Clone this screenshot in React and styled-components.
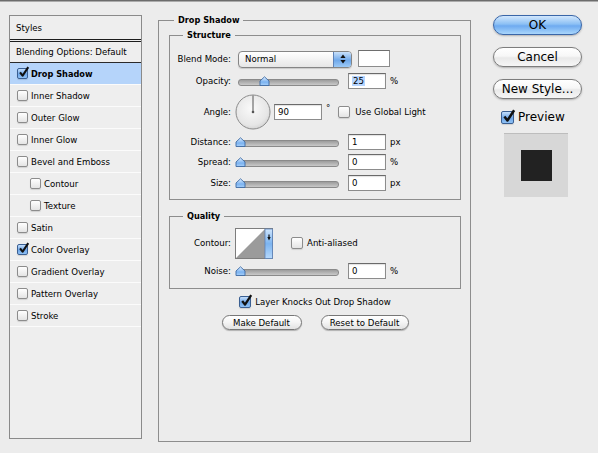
import React from "react";
import styled, { createGlobalStyle } from "styled-components";

const GlobalStyle = createGlobalStyle`
  html, body {
    margin: 0;
    padding: 0;
    background: #ececec;
  }
  body {
    font-family: "Lucida Grande", "DejaVu Sans", sans-serif;
    font-size: 8.6px;
    color: #000;
  }
  * {
    box-sizing: border-box;
  }
`;

const Window = styled.div`
  display: flex;
  align-items: flex-start;
  width: 598px;
  height: 453px;
  padding-left: 9px;
  border-top: 1px solid #6c6c6c;
  box-shadow: inset 0 1px 0 #ababab;
  overflow: hidden;
`;

/* ---------- left list ---------- */

const StylesList = styled.div`
  width: 133px;
  height: 424px;
  margin-top: 14px;
  border: 1px solid #8a8a8a;
  background: #eeeeee;
`;

const ListHeader = styled.div`
  height: 26px;
  display: flex;
  align-items: center;
  padding-left: 6px;
  border-bottom: 3px double #1c1c1c;
`;

const BlendingRow = styled.div`
  height: 21px;
  display: flex;
  align-items: center;
  padding-left: 6px;
  border-bottom: 1px solid #2a2a2a;
`;

const ListItem = styled.div`
  height: 22px;
  display: flex;
  align-items: center;
  gap: 3px;
  padding-left: ${(p) => (p.$indent ? "20px" : "7px")};
  border-bottom: 1px solid #fbfbfb;
  background: ${(p) => (p.$selected ? "#b5d4fa" : "transparent")};
  font-weight: ${(p) => (p.$selected ? "bold" : "normal")};
  font-size: ${(p) => (p.$selected ? "8.2px" : "8.6px")};
`;

/* ---------- checkbox ---------- */

const CheckBox = styled.span`
  position: relative;
  flex: none;
  display: inline-block;
  width: ${(p) => p.$size}px;
  height: ${(p) => p.$size}px;
  border-radius: 2px;
  border: 1px solid ${(p) => (p.$checked ? "#3a5f92" : "#8c8c8c")};
  background: ${(p) =>
    p.$checked
      ? "linear-gradient(#c4defb, #6ea6e8 55%, #8fc1f5)"
      : "linear-gradient(#ffffff, #e4e4e4)"};
  box-shadow: 0 1px 1px rgba(0, 0, 0, 0.12);

  svg {
    position: absolute;
    left: 0;
    top: -3px;
    overflow: visible;
  }
`;

function Check({ checked, size = 11 }) {
  return (
    <CheckBox $checked={checked} $size={size}>
      {checked && (
        <svg width={size} height={size} viewBox="0 0 12 12">
          <path
            d="M2.2 7 L5 10.6 L11.2 1.2"
            fill="none"
            stroke="#111"
            strokeWidth="2.3"
            strokeLinejoin="round"
          />
        </svg>
      )}
    </CheckBox>
  );
}

/* ---------- middle groups ---------- */

const Group = styled.fieldset`
  margin: 0;
  min-width: 0;
  border: 1px solid #8d8d8d;
  padding: ${(p) => p.$pad};
`;

const OuterGroup = styled(Group)`
  width: 313px;
  height: 428px;
  margin-top: 13px;
  margin-left: 16px;
`;

const GroupTitle = styled.legend`
  padding: 0 4px;
  margin-left: ${(p) => p.$offset}px;
  font-weight: bold;
  font-size: 8.2px;
  line-height: 12px;
`;

const Row = styled.div`
  display: flex;
  align-items: center;
  height: ${(p) => p.$h}px;
`;

const CenterRow = styled(Row)`
  justify-content: center;
  gap: ${(p) => p.$gap || 4}px;
  margin-top: 5px;
`;

const Label = styled.span`
  flex: none;
  width: 61px;
  margin-right: 4px;
  text-align: right;
`;

const Select = styled.div`
  display: flex;
  width: 114px;
  height: 17px;
  margin-left: 3px;
  border: 1px solid #858585;
  border-radius: 4px;
  overflow: hidden;
  background: linear-gradient(#ffffff, #f0f0f0 60%, #e6e6e6);
  box-shadow: 0 1px 1px rgba(0, 0, 0, 0.15);
`;

const SelectText = styled.span`
  flex: 1;
  display: flex;
  align-items: center;
  padding-left: 6px;
`;

const SelectArrows = styled.span`
  width: 18px;
  display: flex;
  align-items: center;
  justify-content: center;
  border-left: 1px solid #5d82b8;
  background: linear-gradient(#c9e1fb, #6fa8ea 55%, #9ccaf7);
`;

const Swatch = styled.span`
  width: 32px;
  height: 17px;
  margin-left: 6px;
  margin-top: -1px;
  background: #fff;
  border: 1px solid #8c8c8c;
  border-top-color: #6e6e6e;
`;

const NumberField = styled.span`
  display: flex;
  align-items: center;
  width: ${(p) => p.$w || 38}px;
  height: 16px;
  margin-left: ${(p) => p.$ml || 6}px;
  padding-left: 3px;
  background: #fff;
  border: 1px solid #8c8c8c;
  border-top-color: #6a6a6a;
  box-shadow: inset 0 1px 1px rgba(0, 0, 0, 0.12);
`;

const Selected = styled.span`
  background: #b5d5ff;
  padding: 0 1px;
`;

const Unit = styled.span`
  margin-left: 4px;
  align-self: ${(p) => (p.$raised ? "flex-start" : "center")};
  margin-top: ${(p) => (p.$raised ? "12px" : "0")};
`;

const SliderWrap = styled.div`
  position: relative;
  width: 107px;
  height: 12px;

  &::before {
    content: "";
    position: absolute;
    left: 3px;
    right: 3px;
    top: 4px;
    height: 5px;
    border-radius: 3px;
    border: 1px solid #8a8a8a;
    background: linear-gradient(#9c9c9c, #c9c9c9);
  }
`;

const Thumb = styled.svg`
  position: absolute;
  top: 1px;
`;

function Slider({ value }) {
  const left = -0.5 + (value / 100) * 97;
  return (
    <SliderWrap>
      <Thumb width="11" height="10" viewBox="0 0 11 10" style={{ left }}>
        <defs>
          <linearGradient id="thumbFill" x1="0" y1="0" x2="0" y2="1">
            <stop offset="0" stopColor="#e3f0ff" />
            <stop offset="0.6" stopColor="#7ab2f0" />
            <stop offset="1" stopColor="#a8d0fa" />
          </linearGradient>
        </defs>
        <path
          d="M1 9.5 L1 5 L5.5 0.8 L10 5 L10 9.5 Z"
          fill="url(#thumbFill)"
          stroke="#3d6aa3"
          strokeWidth="0.9"
          strokeLinejoin="round"
        />
      </Thumb>
    </SliderWrap>
  );
}

function Dial() {
  return (
    <svg width="36" height="36" viewBox="0 0 36 36">
      <defs>
        <radialGradient id="dialFill" cx="0.45" cy="0.4" r="0.65">
          <stop offset="0" stopColor="#fafafa" />
          <stop offset="0.75" stopColor="#e6e6e6" />
          <stop offset="1" stopColor="#cfcfcf" />
        </radialGradient>
      </defs>
      <circle cx="18" cy="18" r="17" fill="url(#dialFill)" stroke="#8b8b8b" strokeWidth="1" />
      <line x1="18" y1="18" x2="18" y2="1.5" stroke="#555" strokeWidth="1" />
      <circle cx="18" cy="18" r="1.3" fill="#555" />
    </svg>
  );
}

function ContourSwatch() {
  return (
    <svg width="38" height="31" viewBox="0 0 38 31">
      <defs>
        <linearGradient id="contourArrow" x1="0" y1="0" x2="0" y2="1">
          <stop offset="0" stopColor="#cfe5fc" />
          <stop offset="0.5" stopColor="#7cb4f0" />
          <stop offset="1" stopColor="#b7d9fb" />
        </linearGradient>
      </defs>
      <rect x="0.5" y="0.5" width="37" height="30" fill="#fff" stroke="#7d7d7d" />
      <polygon points="1,30 30,1 30,30" fill="#9b9b9b" />
      <rect x="30" y="1" width="7.5" height="29.5" fill="url(#contourArrow)" stroke="#5d82b8" strokeWidth="0.8" />
      <polygon points="32.3,9 35.7,9 34,12.5" fill="#111" />
      <rect x="33.4" y="6.5" width="1.2" height="3" fill="#111" />
    </svg>
  );
}

const ContourBox = styled.span`
  display: flex;
  width: 38px;
  height: 31px;
`;

const DialBox = styled.span`
  display: flex;
  width: 36px;
  height: 36px;
`;

const InlineCheck = styled.span`
  display: flex;
  align-items: center;
  gap: ${(p) => p.$gap || 5}px;
  margin-left: ${(p) => p.$ml}px;
`;

const PillButton = styled.button`
  width: ${(p) => p.$w}px;
  height: 15px;
  padding: 0;
  font-family: inherit;
  font-size: 8.6px;
  color: #000;
  border: 1px solid #777;
  border-radius: 8px;
  background: linear-gradient(#ffffff, #f4f4f4 50%, #e2e2e2);
  box-shadow: 0 1px 1px rgba(0, 0, 0, 0.25);
`;

/* ---------- right column ---------- */

const SideColumn = styled.div`
  display: flex;
  flex-direction: column;
  width: 89px;
  margin-top: 14px;
  margin-left: 22px;
`;

const AquaButton = styled.button`
  height: 20px;
  margin-bottom: 12px;
  padding: 0;
  font-family: inherit;
  font-size: 12px;
  color: #000;
  border-radius: 10px;
  border: 1px solid ${(p) => (p.$primary ? "#3a66a8" : "#7d7d7d")};
  background: ${(p) =>
    p.$primary
      ? "linear-gradient(#d2e7fd, #8cc0f4 45%, #6eaaf0 55%, #a9d6fc)"
      : "linear-gradient(#ffffff, #f7f7f7 45%, #e9e9e9 55%, #f6f6f6)"};
  box-shadow: 0 1px 2px rgba(0, 0, 0, 0.25);
`;

const PreviewToggle = styled.div`
  display: flex;
  align-items: center;
  gap: 4px;
  height: 16px;
  margin-top: -2px;
  padding-left: 8px;
  font-size: 12px;
`;

const PreviewBox = styled.div`
  display: flex;
  align-items: center;
  justify-content: center;
  width: 64px;
  height: 64px;
  margin-top: 8px;
  margin-left: 11px;
  background: #d7d7d7;
  border-top: 1px solid #bdbdbd;
`;

const PreviewSquare = styled.div`
  width: 31px;
  height: 31px;
  background: #222;
`;

const effects = [
  { name: "Drop Shadow", checked: true, selected: true },
  { name: "Inner Shadow" },
  { name: "Outer Glow" },
  { name: "Inner Glow" },
  { name: "Bevel and Emboss" },
  { name: "Contour", indent: true },
  { name: "Texture", indent: true },
  { name: "Satin" },
  { name: "Color Overlay", checked: true },
  { name: "Gradient Overlay" },
  { name: "Pattern Overlay" },
  { name: "Stroke" },
];

function SliderRow({ label, value, unit, text, h }) {
  return (
    <Row $h={h}>
      <Label>{label}</Label>
      <Slider value={value} />
      <NumberField>{text}</NumberField>
      <Unit>{unit}</Unit>
    </Row>
  );
}

export default function App() {
  return (
    <>
      <GlobalStyle />
      <Window>
        <StylesList>
          <ListHeader>Styles</ListHeader>
          <BlendingRow>Blending Options: Default</BlendingRow>
          {effects.map((e) => (
            <ListItem key={e.name} $selected={e.selected} $indent={e.indent}>
              <Check checked={e.checked} />
              {e.name}
            </ListItem>
          ))}
        </StylesList>

        <OuterGroup $pad="3px 9px 0 10px">
          <GroupTitle $offset={5}>Drop Shadow</GroupTitle>

          <Group $pad="7px 8px 6px 0">
            <GroupTitle $offset={13}>Structure</GroupTitle>
            <Row $h={22}>
              <Label>Blend Mode:</Label>
              <Select>
                <SelectText>Normal</SelectText>
                <SelectArrows>
                  <svg width="6" height="10" viewBox="0 0 6 10">
                    <polygon points="3,0.5 5.6,4 0.4,4" fill="#111" />
                    <polygon points="0.4,6 5.6,6 3,9.5" fill="#111" />
                  </svg>
                </SelectArrows>
              </Select>
              <Swatch />
            </Row>
            <Row $h={21}>
              <Label>Opacity:</Label>
              <Slider value={25} />
              <NumberField>
                <Selected>25</Selected>
              </NumberField>
              <Unit>%</Unit>
            </Row>
            <Row $h={42}>
              <Label>Angle:</Label>
              <DialBox>
                <Dial />
              </DialBox>
              <NumberField $w={48} $ml={3}>90</NumberField>
              <Unit $raised>°</Unit>
              <InlineCheck $ml={8} $gap={5}>
                <Check size={12} />
                Use Global Light
              </InlineCheck>
            </Row>
            <SliderRow h={18} label="Distance:" value={0} text="1" unit="px" />
            <SliderRow h={22} label="Spread:" value={0} text="0" unit="%" />
            <SliderRow h={20} label="Size:" value={0} text="0" unit="px" />
          </Group>

          <Group $pad="4px 8px 6px 0" style={{ marginTop: 10 }}>
            <GroupTitle $offset={13}>Quality</GroupTitle>
            <Row $h={34}>
              <Label>Contour:</Label>
              <ContourBox>
                <ContourSwatch />
              </ContourBox>
              <InlineCheck $ml={18} $gap={4}>
                <Check size={12} />
                Anti-aliased
              </InlineCheck>
            </Row>
            <SliderRow h={22} label="Noise:" value={0} text="0" unit="%" />
          </Group>

          <CenterRow $h={16} $gap={4}>
            <Check checked size={12} />
            Layer Knocks Out Drop Shadow
          </CenterRow>
          <CenterRow $h={15} $gap={19}>
            <PillButton $w={80}>Make Default</PillButton>
            <PillButton $w={88}>Reset to Default</PillButton>
          </CenterRow>
        </OuterGroup>

        <SideColumn>
          <AquaButton $primary>OK</AquaButton>
          <AquaButton>Cancel</AquaButton>
          <AquaButton>New Style...</AquaButton>
          <PreviewToggle>
            <Check checked size={13} />
            Preview
          </PreviewToggle>
          <PreviewBox>
            <PreviewSquare />
          </PreviewBox>
        </SideColumn>
      </Window>
    </>
  );
}
